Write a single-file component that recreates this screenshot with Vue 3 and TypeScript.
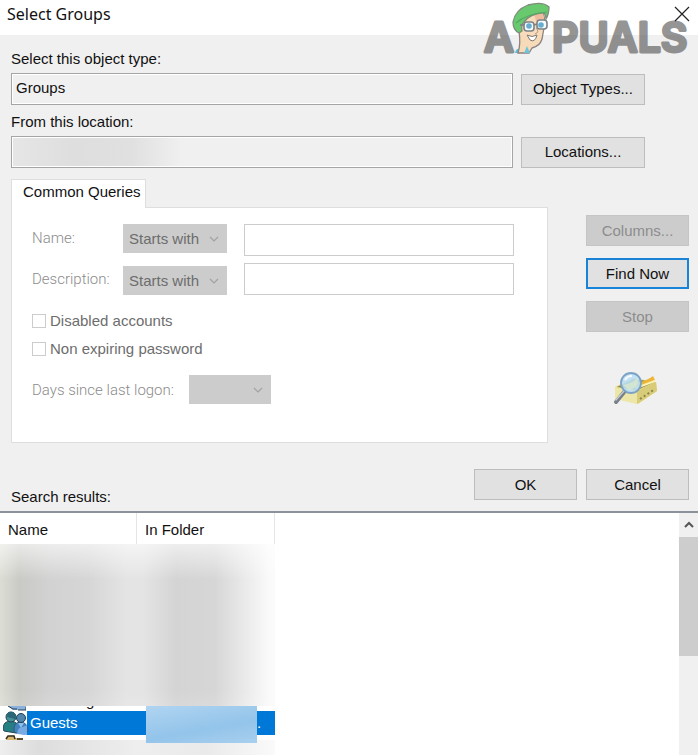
<script setup lang="ts">
import { ref } from 'vue'

interface Query {
  id: string
  label: string
}

const queries: Query[] = [
  { id: 'name', label: 'Name:' },
  { id: 'description', label: 'Description:' },
]
const flags: Query[] = [
  { id: 'disabled', label: 'Disabled accounts' },
  { id: 'password', label: 'Non expiring password' },
]
const objectType = ref('Groups')
const locationName = ref('')
</script>

<template>
  <main class="dialog">
    <header class="titlebar">
      <h1>Select Groups</h1>
      <button class="close" type="button" aria-label="Close">
        <svg viewBox="0 0 16 16" width="16" height="16"><path d="M1 1 15 15M15 1 1 15" fill="none" stroke="#222" stroke-width="1.2" /></svg>
      </button>
    </header>

    <svg class="brand" viewBox="0 0 210 60" width="210" height="60">
      <g class="letters">
        <text x="1" y="51">A</text>
        <text x="69" y="51">PUALS</text>
      </g>
      <g class="mascot" transform="translate(29 1)">
        <path d="M3 51 Q4 46 8 47 L16 51Z" fill="#58b5d3" />
        <path d="M6 51 Q9 42 7 29 Q4 28 4 23 L10 16 30 9 Q34 15 32 26 L30 37 Q28 44 20 46 L17 51Z" fill="#f8d9b4" stroke="#807773" stroke-width="1.3" />
        <path d="M22 12 30 10 Q33 15 32 21 L24 19Z" fill="#f0b495" />
        <path d="M7 31 Q1 28 1 20 Q3 8 16 3 Q31 -1 37 5 Q37 12 34 17 Q34 10 29 11 Q18 12 12 20 Q9 22 10 29Z" fill="#58c45f" stroke="#74806f" stroke-width="1.3" />
        <path d="M4 21 Q14 12 35 10" fill="none" stroke="#43a050" stroke-width="1.2" />
        <rect x="12" y="20" width="10" height="9" rx="3" fill="#f5fbff" stroke="#6c757a" stroke-width="1.6" />
        <rect x="25" y="18" width="10" height="9" rx="3" fill="#f5fbff" stroke="#6c757a" stroke-width="1.6" />
        <path d="M8 23 12 23M22 23 25 22" stroke="#6c757a" stroke-width="1.5" />
        <circle cx="17" cy="24" r="2.8" fill="#56a5cb" /><circle cx="29" cy="23" r="2.8" fill="#56a5cb" />
        <path d="M24 26 Q28 30 23 32" fill="none" stroke="#a58c75" />
        <path d="M15 33 Q20 36 25 33 Q23 41 18 38Z" fill="#fff" stroke="#756d68" />
        <path d="M12 51 15 44 18 51Z" fill="#62c0dc" />
      </g>
    </svg>

    <form class="form" @submit.prevent>
      <label class="caption" for="object-type">Select this object type:</label>
      <div class="picker">
        <input id="object-type" v-model="objectType" class="field" type="text" readonly />
        <button class="btn wide" type="button">Object Types...</button>
      </div>
      <label class="caption second" for="location">From this location:</label>
      <div class="picker">
        <input id="location" v-model="locationName" class="field masked" type="text" readonly />
        <button class="btn wide" type="button">Locations...</button>
      </div>

      <div class="middle">
        <section class="tabs">
          <button class="tab" type="button" role="tab" aria-selected="true">Common Queries</button>
          <div class="panel">
            <div v-for="q in queries" :key="q.id" class="query">
              <label class="thin" :for="q.id">{{ q.label }}</label>
              <span class="combo">
                <select disabled :aria-label="q.label"><option>Starts with</option></select>
                <svg viewBox="0 0 10 6" width="10" height="6"><path d="M1 1 5 5 9 1" fill="none" stroke="#a2a2a2" stroke-width="1.2" /></svg>
              </span>
              <input :id="q.id" class="entry" type="text" disabled />
            </div>
            <div class="checks">
              <label v-for="f in flags" :key="f.id" class="check">
                <input type="checkbox" disabled />{{ f.label }}
              </label>
            </div>
            <div class="days">
              <label class="thin" for="days">Days since last logon:</label>
              <span class="combo short">
                <select id="days" disabled><option></option></select>
                <svg viewBox="0 0 10 6" width="10" height="6"><path d="M1 1 5 5 9 1" fill="none" stroke="#a2a2a2" stroke-width="1.2" /></svg>
              </span>
            </div>
          </div>
        </section>
        <aside class="side">
          <button class="btn" type="button" disabled>Columns...</button>
          <button class="btn primary" type="submit">Find Now</button>
          <button class="btn" type="button" disabled>Stop</button>
          <svg class="search-icon" viewBox="0 0 46 36" width="46" height="36">
            <path d="M2 16 20 7 43 11 44 20 25 33 2 27Z" fill="#e4d884" />
            <path d="M2 16 24 20 24 33 2 28Z" fill="#ece6a9" />
            <path d="M24 20 43 11 44 20 24 33Z" fill="#d9cc78" />
            <path d="M4 16 20 8 42 11 24 19Z" fill="#8c8847" />
            <path d="M20 13 Q34 10 40 5 L42 9 23 18Z" fill="#edb638" />
            <path d="M23 17 42 10" stroke="#faf1b4" stroke-width="2" />
            <path d="M27 28 42 18" stroke="#8a8350" stroke-width="2" stroke-dasharray="2 2.5" />
            <path d="M12 20 3 31" stroke="#777f87" stroke-width="4" stroke-linecap="round" />
            <path d="M11 20 3 29" stroke="#c7ced2" stroke-width="1.3" stroke-linecap="round" />
            <circle cx="18" cy="12" r="10" fill="#bddff3" fill-opacity=".9" stroke="#7ca3c5" stroke-width="1.8" />
            <path d="M10 14 Q18 13 25 7 Q26 17 16 19Z" fill="#e1edc9" opacity=".65" />
            <path d="M12 9 Q14 5 19 5" fill="none" stroke="#f4fcff" stroke-width="2" />
          </svg>
        </aside>
      </div>

      <div class="actions">
        <span class="results-label">Search results:</span>
        <button class="btn" type="button">OK</button>
        <button class="btn" type="button">Cancel</button>
      </div>
    </form>

    <section class="results">
      <div class="list">
        <table aria-label="Search results">
          <colgroup><col class="name-col" /><col /></colgroup>
          <thead>
            <tr><th>Name</th><th>In Folder</th></tr>
          </thead>
          <tbody>
            <tr class="hidden-rows"><td colspan="2"></td></tr>
            <tr class="sliver">
              <td colspan="2">
                <div class="clip">
                  <svg viewBox="0 0 26 5" width="26" height="5"><path d="M8 0 13 4 26 4V0Z" fill="#8bb2dc" /><path d="M8 0 13 3 17 3M18 4H26V1" fill="none" stroke="#293c50" /></svg>
                  <span>g</span>
                </div>
              </td>
            </tr>
            <tr class="selected">
              <td>
                <div class="entry-name">
                  <svg viewBox="0 0 26 24" width="26" height="24">
                    <path d="M0 18 Q0 10 8 10 Q16 11 16 19 L13 22 1 20Z" fill="#267f83" stroke="#254858" />
                    <circle cx="8" cy="6" r="5" fill="#47919c" stroke="#244451" />
                    <path d="M4 6 Q4 0 9 1 Q14 2 12 8" fill="#2b6776" />
                    <path d="M11 20 Q10 11 18 11 Q25 12 25 20 L22 23 13 22Z" fill="#4583bd" stroke="#315683" />
                    <circle cx="18" cy="7" r="4.5" fill="#4f86aa" stroke="#233e5b" />
                    <path d="M15 12 18 17 21 12" fill="#8ac0e9" />
                    <path d="M14 23 Q15 15 20 16 L24 14V24Z" fill="#78aae3" />
                  </svg>
                  <span>Guests</span>
                </div>
              </td>
              <td><div class="folder"><i></i><span>.</span></div></td>
            </tr>
            <tr class="sliver">
              <td colspan="2">
                <div class="clip">
                  <svg viewBox="0 0 26 5" width="26" height="5"><path d="M6 5 8 1 14 0 15 3 23 3V5Z" fill="#d6b76b" /><path d="M6 4 8 1 14 1 15 4M17 4H23" fill="none" stroke="#332d21" stroke-width="1.5" /></svg>
                </div>
              </td>
            </tr>
            <tr class="hidden-rows tail"><td colspan="2"></td></tr>
          </tbody>
        </table>
      </div>
      <div class="scrollbar">
        <button type="button" aria-label="Scroll up">
          <svg viewBox="0 0 10 8" width="10" height="8"><path d="M1 6 5 2 9 6" fill="none" stroke="#555" stroke-width="2" /></svg>
        </button>
        <div class="thumb"></div>
      </div>
    </section>
  </main>
</template>

<style>
body { margin: 0; }
</style>

<style scoped>
* { box-sizing: border-box; }
.dialog {
  position: relative;
  display: flex;
  flex-direction: column;
  height: 100vh;
  overflow: hidden;
  background: #f0f0f0;
  color: #111;
  font: 15px/20px "Liberation Sans", Arial, sans-serif;
}
button, input, select { font: inherit; color: inherit; margin: 0; border-radius: 0; }
.titlebar {
  display: flex;
  justify-content: space-between;
  align-items: center;
  height: 35px;
  flex: none;
  padding: 0 8px 8px 7px;
  background: #fff;
}
h1 { margin: 0; font: 400 16px/24px "Noto Sans", "Open Sans", sans-serif; }
.close { display: flex; padding: 0; border: 0; background: none; z-index: 2; }
.brand {
  position: absolute;
  top: 1px;
  right: 5px;
  overflow: visible;
  pointer-events: none;
}
.letters {
  fill: #555;
  stroke: #555;
  stroke-width: 3px;
  stroke-linejoin: round;
  opacity: .62;
  font: 600 41px Inter, sans-serif;
}
.mascot { opacity: .9; }
.form { flex: none; padding: 14px 9px 11px 11px; }
.caption { display: block; margin-bottom: 4px; }
.caption.second { margin-top: 7px; }
.picker { display: flex; align-items: center; gap: 8px; padding-right: 44px; }
.field {
  flex: 1;
  min-width: 0;
  height: 32px;
  padding: 0 4px 4px;
  border: 1px solid #a5a5a5;
  box-shadow: inset 0 0 0 1px #fff;
  background: #f0f0f0;
  outline: 0;
}
.masked {
  background: linear-gradient(90deg, #e6e6e6, #dedede 12%, #e0e0e0 24%, #f0f0f0 34%);
}
.btn {
  flex: none;
  width: 103px;
  height: 31px;
  padding: 0;
  border: 1px solid #bdbdbd;
  background: #e1e1e1;
}
.btn.wide { width: 124px; }
.btn:disabled { border-color: #c5c5c5; background: #ccc; color: #8c8c8c; }
.btn.primary { border: 2px solid #1883d7; }
.middle { display: flex; gap: 38px; margin-top: 11px; }
.tabs { flex: 1; min-width: 0; }
.tab {
  position: relative;
  z-index: 1;
  display: block;
  height: 29px;
  margin-bottom: -1px;
  padding: 0 4px 4px 11px;
  border: 1px solid #dedede;
  border-bottom: 0;
  background: #fff;
}
.panel {
  height: 236px;
  padding: 16px 33px 0 20px;
  border: 1px solid #dedede;
  background: #fff;
}
.query { display: flex; align-items: flex-start; margin-bottom: 7px; }
.query + .query { align-items: flex-end; }
.thin { color: #8c8c8c; font: 300 15px/20px Roboto, "Liberation Sans", sans-serif; }
.query .thin { align-self: center; width: 91px; padding-bottom: 4px; }
.query + .query .thin { padding-bottom: 0; }
.combo { display: grid; align-items: center; width: 104px; height: 29px; }
.combo select {
  grid-area: 1 / 1;
  width: 100%;
  height: 100%;
  padding: 0 6px;
  border: 0;
  appearance: none;
  background: #ccc;
  color: #6d6d6d;
  opacity: 1;
}
.combo svg { grid-area: 1 / 1; justify-self: end; margin-right: 8px; pointer-events: none; }
.combo.short { width: 82px; }
.entry {
  flex: 1;
  min-width: 0;
  height: 32px;
  margin-left: 17px;
  border: 1px solid #ccc;
  background: #fff;
}
.checks { display: grid; gap: 8px; padding-top: 9px; }
.check { display: flex; align-items: center; gap: 4px; color: #6d6d6d; }
.check input { appearance: none; width: 14px; height: 14px; border: 1px solid #ccc; background: #fff; }
.days { display: flex; align-items: center; gap: 15px; margin-top: 16px; }
.side { display: flex; flex-direction: column; gap: 12px; width: 103px; padding-top: 36px; }
.search-icon { margin: 27px 0 0 27px; }
.actions { display: flex; align-items: flex-start; gap: 9px; margin-top: 26px; }
.results-label { flex: 1; padding-top: 18px; margin-bottom: -7px; }
.results {
  display: flex;
  flex: 1;
  min-height: 0;
  border-top: 2px solid #8c929c;
  background: #fff;
}
.list { flex: 1; overflow: hidden; }
table { width: 275px; table-layout: fixed; border-collapse: separate; border-spacing: 0; }
.name-col { width: 137px; }
th {
  height: 31px;
  padding: 2px 8px 0;
  border-right: 1px solid #e5e5e5;
  font-weight: 400;
  text-align: left;
}
td { padding: 0; }
.hidden-rows td {
  position: relative;
  z-index: 1;
  height: 162px;
  background:
    linear-gradient(180deg, rgba(255, 255, 255, .6), transparent 22%, transparent 90%, rgba(255, 255, 255, .1)),
    linear-gradient(90deg, #dcded5, #c9cac5 7%, #d2d2d2 18%, #d6d6d6 32%, #e4e4e4 46%, #e4e4e4 52%, #d4d4d4 64%, #d6d6d6 78%, #fafafa 98%);
}
.hidden-rows.tail td { background: linear-gradient(90deg, #eee, #ddd 14%, #eee 50%, #eaeaea 75%, #fafafa); }
.clip { display: flex; height: 5px; }
.clip span { align-self: flex-end; margin-left: 60px; line-height: 20px; }
.clip svg, .entry-name svg { flex: none; display: block; }
.selected td { height: 24px; background: #0078d7; color: #fff; }
.selected td:first-child { background: linear-gradient(90deg, #fff 27px, #0078d7 27px); }
.entry-name { display: flex; align-items: center; gap: 1px; padding-left: 3px; }
.folder { position: relative; height: 24px; }
.folder i {
  position: absolute;
  z-index: 2;
  top: -5px;
  left: 9px;
  width: 111px;
  height: 37px;
  background: linear-gradient(170deg, #b0d4f1, #93c4ea 60%, #a8cfef);
}
.folder span { display: block; padding: 2px 0 0 120px; }
.scrollbar { width: 19px; background: #f0f0f0; }
.scrollbar button {
  display: flex;
  align-items: center;
  justify-content: center;
  width: 100%;
  height: 24px;
  padding: 0;
  border: 0;
  background: #f0f0f0;
}
.thumb { height: 119px; background: #cdcdcd; }
</style>
